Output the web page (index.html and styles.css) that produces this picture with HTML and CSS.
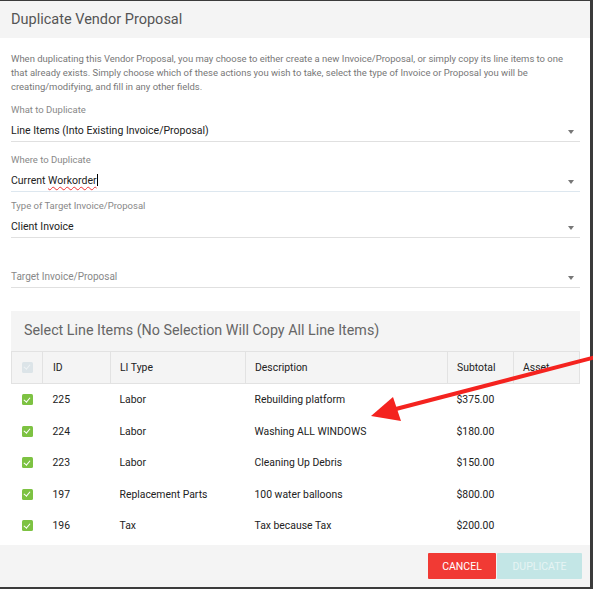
FILE: index.html
```html
<!DOCTYPE html>
<html>
<head>
<meta charset="utf-8">
<link rel="stylesheet" href="styles.css">
</head>
<body>
<div class="dialog">
  <div class="header">Duplicate Vendor Proposal</div>
  <div class="content">
    <p class="desc">When duplicating this Vendor Proposal, you may choose to either create a new Invoice/Proposal, or simply copy its line items to one that already exists. Simply choose which of these actions you wish to take, select the type of Invoice or Proposal you will be creating/modifying, and fill in any other fields.</p>
    <div class="field first">
      <div class="label">What to Duplicate</div>
      <div class="value">Line Items (Into Existing Invoice/Proposal)<span class="caret"></span></div>
    </div>
    <div class="field focused">
      <div class="label">Where to Duplicate</div>
      <div class="value">Current <span class="typo">Workorder</span><span class="cursor"></span><span class="caret"></span></div>
    </div>
    <div class="field tight">
      <div class="label">Type of Target Invoice/Proposal</div>
      <div class="value">Client Invoice<span class="caret"></span></div>
    </div>
    <div class="field nolabel">
      <div class="value placeholder">Target Invoice/Proposal<span class="caret"></span></div>
    </div>

    <div class="items">
      <div class="items-title">Select Line Items (No Selection Will Copy All Line Items)</div>
      <table class="grid">
        <thead>
          <tr>
            <th class="c-check"><span class="cb cb-head"></span></th>
            <th class="c-id">ID</th>
            <th class="c-type">LI Type</th>
            <th class="c-desc">Description</th>
            <th class="c-sub">Subtotal</th>
            <th class="c-asset">Asset</th>
          </tr>
        </thead>
        <tbody>
          <tr><td><span class="cb"></span></td><td>225</td><td>Labor</td><td>Rebuilding platform</td><td>$375.00</td><td></td></tr>
          <tr><td><span class="cb"></span></td><td>224</td><td>Labor</td><td>Washing ALL WINDOWS</td><td>$180.00</td><td></td></tr>
          <tr><td><span class="cb"></span></td><td>223</td><td>Labor</td><td>Cleaning Up Debris</td><td>$150.00</td><td></td></tr>
          <tr><td><span class="cb"></span></td><td>197</td><td>Replacement Parts</td><td>100 water balloons</td><td>$800.00</td><td></td></tr>
          <tr><td><span class="cb"></span></td><td>196</td><td>Tax</td><td>Tax because Tax</td><td>$200.00</td><td></td></tr>
        </tbody>
      </table>
    </div>
  </div>
  <div class="footer">
    <button class="btn btn-cancel">Cancel</button>
    <button class="btn btn-dup">Duplicate</button>
  </div>
</div>
<svg class="annot" width="593" height="589" viewBox="0 0 593 589">
  <line x1="596" y1="357" x2="392" y2="410" stroke="#f4231f" stroke-width="4"/>
  <polygon points="371,416 393,397 401,421" fill="#f4231f"/>
</svg>
</body>
</html>
```

FILE: styles.css
```css
html, body {
  margin: 0;
  padding: 0;
}
body {
  background: #3b3b3b;
  width: 593px;
  height: 589px;
  overflow: hidden;
  position: relative;
  font-family: Roboto, "Liberation Sans", Arial, sans-serif;
}
.dialog {
  margin-top: 1px;
  width: 590px;
  height: 586px;
  background: #fff;
  display: flex;
  flex-direction: column;
}
.header {
  height: 37px;
  line-height: 37px;
  background: #f4f4f4;
  padding-left: 11px;
  font-size: 14.5px;
  color: #555;
}
.content {
  padding: 14px 10px 0 11px;
  flex: 1;
}
.desc {
  margin: 0;
  padding-right: 6px;
  font-size: 9.47px;
  line-height: 14px;
  color: #777;
}
.field {
  padding-top: 12px;
  border-bottom: 1px solid #e0e0e0;
}
.field.first { padding-top: 10px; }
.field.tight { padding-top: 8px; }
.field.nolabel { padding-top: 29px; }
.field.focused { border-bottom-color: #dde7ef; }
.label {
  font-size: 9.5px;
  line-height: 12px;
  color: #888;
  margin-bottom: 5px;
}
.value {
  position: relative;
  font-size: 10.5px;
  line-height: 20px;
  height: 20px;
  color: #222;
}
.value.placeholder { color: #888; font-size: 10px; }
.typo {
  text-decoration: underline wavy #e33;
  text-decoration-thickness: 1px;
  text-underline-offset: 2px;
}
.cursor {
  display: inline-block;
  width: 1px;
  height: 12px;
  background: #000;
  vertical-align: -2px;
}
.caret {
  position: absolute;
  right: 6px;
  top: 9px;
  width: 0;
  height: 0;
  border-left: 3.5px solid transparent;
  border-right: 3.5px solid transparent;
  border-top: 4px solid #777;
}
.items {
  margin-top: 23px;
  padding-bottom: 3px;
}
.items-title {
  background: #f4f4f4;
  height: 40px;
  line-height: 38px;
  padding-left: 13px;
  font-size: 14.3px;
  color: #666;
}
.grid {
  width: 100%;
  border-collapse: collapse;
  font-size: 10.4px;
  color: #222;
}
.grid th {
  background: #f4f4f4;
  border: 1px solid #e2e2e2;
  height: 31px;
  text-align: left;
  font-weight: normal;
  padding: 0 0 0 9px;
}
.grid td {
  height: 31.5px;
  padding: 0 0 0 9px;
}
.grid th.c-id, .grid td:nth-child(2) { padding-left: 10px; }
.grid th.c-check, .grid tr td:first-child {
  padding-left: 10px;
  width: 20px;
}
.c-id { width: 57px; }
.c-type { width: 125px; }
.c-desc { width: 192px; }
.c-sub { width: 56px; }
.cb {
  display: block;
  width: 11px;
  height: 11px;
  border-radius: 1.5px;
  background: #7dc242;
  position: relative;
}
.cb::after {
  content: "";
  position: absolute;
  left: 3.3px;
  top: 1.4px;
  width: 2.6px;
  height: 5px;
  border-right: 1.5px solid #fff;
  border-bottom: 1.5px solid #fff;
  transform: rotate(40deg);
}
.cb-head { background: #dce4e8; }
.cb-head::after { border-color: #eef2f4; }
.footer {
  height: 42px;
  background: #f4f4f4;
  display: flex;
  justify-content: flex-end;
  align-items: flex-start;
  padding: 8px 8px 0 0;
  box-sizing: border-box;
  gap: 1px;
}
.btn {
  border: none;
  height: 26px;
  font-family: Roboto, "Liberation Sans", Arial, sans-serif;
  font-size: 10.5px;
  text-transform: uppercase;
  border-radius: 1px;
  padding: 0;
}
.btn-cancel {
  width: 68px;
  background: #f13a34;
  color: #fff;
}
.btn-dup {
  width: 85px;
  background: #c3e6e6;
  color: #e6f4f4;
}
.annot {
  position: absolute;
  left: 0;
  top: 0;
  pointer-events: none;
}
```
